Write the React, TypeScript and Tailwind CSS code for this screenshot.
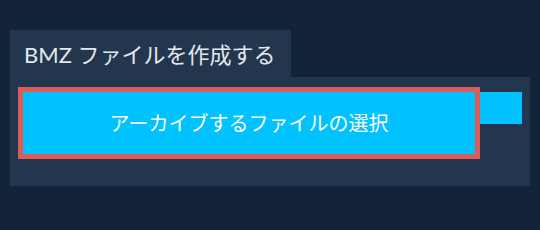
export default function App() {
  return (
    <div className="w-full h-[230px] bg-[#12233a] pt-[30px] px-[10px]" style={{ fontFamily: 'Lato, "Noto Sans CJK JP", sans-serif' }}>
      <div className="w-[281px] h-[47px] bg-[#22364d] flex items-center pl-[14px] pt-[1px] text-[22px] text-[#e4e8ee]">
        BMZ ファイルを作成する
      </div>
      <div className="w-[520px] h-[109px] bg-[#22364d] pt-[10px] pl-[8px] flex items-start">
        <button className="w-[462px] h-[72px] border-[5px] border-[#dc5d58] bg-[#00c2ff] text-white text-[20px] flex items-center justify-center">
          アーカイブするファイルの選択
        </button>
        <div className="w-[42px] h-[32px] mt-[5px] bg-[#00c2ff]" />
      </div>
    </div>
  )
}
